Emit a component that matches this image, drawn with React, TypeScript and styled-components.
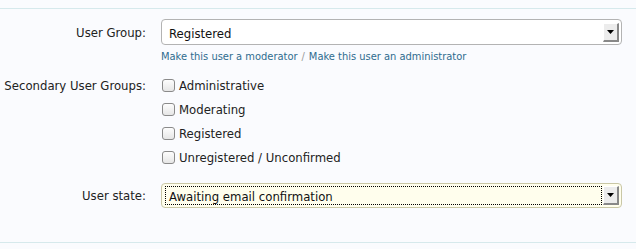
import styled, { createGlobalStyle } from 'styled-components';

const GlobalStyle = createGlobalStyle`
    html, body {
        margin: 0;
        padding: 0;
        background: #fafbfe;
    }
    body {
        font-family: "DejaVu Sans Condensed", "DejaVu Sans", Tahoma, sans-serif;
        font-size: 13px;
        color: #222;
    }
`

const groups = ['Administrative', 'Moderating', 'Registered', 'Unregistered / Unconfirmed'];

const Arrow = () => (
    <ArrowButton>
        <svg width="7" height="4" viewBox="0 0 7 4">
            <path d="M0 0h7L3.5 4z" fill="#000" />
        </svg>
    </ArrowButton>
);

const App = () => {
    return (
        <>
            <GlobalStyle />
            <Form>
                <Row>
                    <Label>User Group:</Label>
                    <Control>
                        <Select>
                            <SelectText>Registered</SelectText>
                            <Arrow />
                        </Select>
                        <Links>
                            <Link href="#">Make this user a moderator</Link>
                            <Sep>/</Sep>
                            <Link href="#">Make this user an administrator</Link>
                        </Links>
                    </Control>
                </Row>
                <Row $top={9}>
                    <Label $line={25}>Secondary User Groups:</Label>
                    <Control>
                        {groups.map((g) => (
                            <CheckRow key={g}>
                                <Box />
                                {g}
                            </CheckRow>
                        ))}
                    </Control>
                </Row>
                <Row $top={14}>
                    <Label $line={26}>User state:</Label>
                    <Control>
                        <Select $focused>
                            <SelectText $focused>Awaiting email confirmation</SelectText>
                            <Arrow />
                        </Select>
                    </Control>
                </Row>
            </Form>
        </>
    );
};

export default App;

const Form = styled.div`
    margin-top: 8px;
    border-top: 1px solid #d6e9ec;
    border-bottom: 1px solid #d6e9ec;
    padding: 10px 0 33px;
`
const Row = styled.div<{ $top?: number }>`
    display: flex;
    align-items: flex-start;
    gap: 15px;
    margin-top: ${(p) => p.$top ?? 0}px;
`
const Label = styled.div<{ $line?: number }>`
    width: 146px;
    flex: none;
    text-align: right;
    line-height: ${(p) => p.$line ?? 28}px;
    color: #222;
    white-space: nowrap;
`
const Control = styled.div`
    width: 461px;
    display: flex;
    flex-direction: column;
`
const Select = styled.div<{ $focused?: boolean }>`
    height: ${(p) => (p.$focused ? 25 : 26)}px;
    box-sizing: border-box;
    border: 1px solid ${(p) => (p.$focused ? '#c9c7a6' : '#b3b3b3')};
    border-radius: 4px;
    background: ${(p) => (p.$focused ? '#fffeed' : '#fff')};
    display: flex;
    align-items: center;
    padding: 2px 2px 2px 3px;
    gap: 1px;
`
const SelectText = styled.div<{ $focused?: boolean }>`
    flex: 1;
    align-self: stretch;
    display: flex;
    align-items: center;
    padding: 2px 0 0 3px;
    font-size: 13px;
    color: #111;
    border: 1px dotted ${(p) => (p.$focused ? '#000' : 'transparent')};
`
const ArrowButton = styled.div`
    width: 16px;
    height: 19px;
    box-sizing: border-box;
    background: #ececec;
    border-top: 1px solid #fff;
    border-left: 1px solid #fff;
    border-right: 2px solid #888;
    border-bottom: 2px solid #888;
    display: flex;
    align-items: center;
    justify-content: center;
`
const Links = styled.div`
    margin-top: 5px;
    line-height: 14px;
    font-size: 11px;
    display: flex;
    gap: 4px;
`
const Link = styled.a`
    color: #2f6c8f;
    text-decoration: none;
`
const Sep = styled.span`
    color: #999;
`
const CheckRow = styled.label`
    display: flex;
    align-items: center;
    height: 24px;
    gap: 4px;
    padding-left: 1px;
    font-size: 13px;
`
const Box = styled.span`
    width: 11px;
    height: 11px;
    border: 1px solid #8a8a8a;
    border-radius: 3px;
    background: linear-gradient(#fdfdfd, #e6e6e6);
`
